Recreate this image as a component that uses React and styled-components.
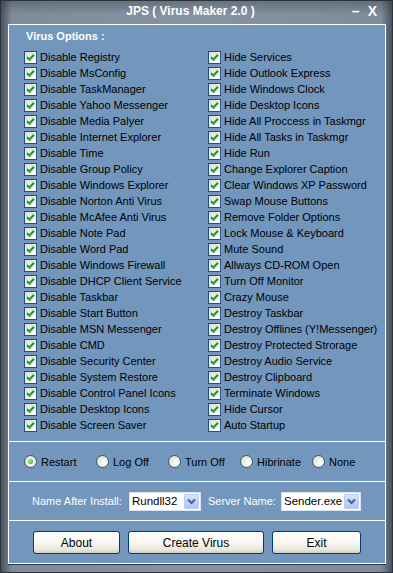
import React from "react"
import styled, { createGlobalStyle } from "styled-components"

const GlobalStyle = createGlobalStyle`
  * { box-sizing: border-box; }
  body {
    margin: 0;
    background: #3a434d;
    font-family: Tahoma, "Liberation Sans", Arial, sans-serif;
    font-size: 11px;
  }
`

const leftOptions = [
  "Disable Registry",
  "Disable MsConfig",
  "Disable TaskManager",
  "Disable Yahoo Messenger",
  "Disable Media Palyer",
  "Disable Internet Explorer",
  "Disable Time",
  "Disable Group Policy",
  "Disable Windows Explorer",
  "Disable Norton Anti Virus",
  "Disable McAfee Anti Virus",
  "Disable Note Pad",
  "Disable Word Pad",
  "Disable Windows Firewall",
  "Disable DHCP Client Service",
  "Disable Taskbar",
  "Disable Start Button",
  "Disable MSN Messenger",
  "Disable CMD",
  "Disable Security Center",
  "Disable System Restore",
  "Disable Control Panel Icons",
  "Disable Desktop Icons",
  "Disable Screen Saver",
]

const rightOptions = [
  "Hide Services",
  "Hide Outlook Express",
  "Hide Windows Clock",
  "Hide Desktop Icons",
  "Hide All Proccess in Taskmgr",
  "Hide All Tasks in Taskmgr",
  "Hide Run",
  "Change Explorer Caption",
  "Clear Windows XP Password",
  "Swap Mouse Buttons",
  "Remove Folder Options",
  "Lock Mouse & Keyboard",
  "Mute Sound",
  "Allways CD-ROM Open",
  "Turn Off Monitor",
  "Crazy Mouse",
  "Destroy Taskbar",
  "Destroy Offlines (Y!Messenger)",
  "Destroy Protected Strorage",
  "Destroy Audio Service",
  "Destroy Clipboard",
  "Terminate Windows",
  "Hide Cursor",
  "Auto Startup",
]

const restartModes = ["Restart", "Log Off", "Turn Off", "Hibrinate", "None"]

const Window = styled.div`
  width: 393px;
  height: 573px;
  display: flex;
  flex-direction: column;
  background: linear-gradient(90deg, #434c57 0%, #7d8b9b 3%, #8593a3 50%, #7d8b9b 97%, #434c57 100%);
  box-shadow: inset 0 0 0 1px #2c333b;
  overflow: hidden;
`

const TitleBar = styled.div`
  height: 24px;
  display: grid;
  grid-template-columns: 40px 1fr 40px;
  align-items: center;
  padding: 0 8px 3px 8px;
  color: #fff;
  font-family: Tahoma, "Liberation Sans", Arial, sans-serif;
  font-weight: bold;
  font-size: 12px;
  background: linear-gradient(180deg, rgba(40, 48, 56, 0.35) 0%, rgba(0, 0, 0, 0) 60%);
`

const Title = styled.div`
  text-align: center;
  padding-right: 12px;
`

const Controls = styled.div`
  justify-self: end;
  display: flex;
  align-items: center;
  gap: 8px;
  font-size: 14px;
  margin-right: 8px;
`

const Panel = styled.div`
  margin: 0 7px 9px 8px;
  border: 1px solid #fff;
  background: #7296bc;
  display: flex;
  flex-direction: column;
  box-shadow: 0 1px 0 #2c333b;
`

const OptionsSection = styled.div`
  padding: 3px 0 8px 15px;
`

const Heading = styled.div`
  color: #fff;
  font-weight: bold;
  line-height: 16px;
  padding-left: 2px;
`

const OptionGrid = styled.div`
  display: grid;
  grid-template-columns: 184px 1fr;
  margin-top: 5px;
`

const Column = styled.div`
  display: flex;
  flex-direction: column;
`

const Row = styled.label`
  display: flex;
  align-items: center;
  height: 16px;
  gap: 3px;
  color: #000;
  white-space: nowrap;
`

const Box = styled.span`
  width: 13px;
  height: 13px;
  border: 1px solid #1c5180;
  background: linear-gradient(135deg, #dcdcd5 0%, #f4f4f0 60%, #fff 100%);
  display: flex;
  align-items: center;
  justify-content: center;
  flex-shrink: 0;
`

const Section = styled.div`
  border-top: 1px solid #fff;
  height: ${p => p.$h}px;
  display: flex;
  align-items: ${p => p.$align || "center"};
  padding: ${p => p.$pad};
`

const RadioItem = styled.label`
  width: 72px;
  display: flex;
  align-items: center;
  gap: 4px;
  color: #000;
  white-space: nowrap;
`

const RadioDot = styled.span`
  width: 13px;
  height: 13px;
  border-radius: 50%;
  border: 1px solid #3e5873;
  background: radial-gradient(circle at 65% 65%, #fff 0%, #eeeee8 45%, #cfcfc6 100%);
  display: flex;
  align-items: center;
  justify-content: center;
  flex-shrink: 0;

  &::after {
    content: "";
    display: ${p => (p.$on ? "block" : "none")};
    width: 5px;
    height: 5px;
    border-radius: 50%;
    background: radial-gradient(circle at 35% 35%, #a8f0a0, #21a121);
  }
`

const FieldLabel = styled.span`
  color: #fff;
  width: ${p => p.$w}px;
  flex-shrink: 0;
  white-space: nowrap;
`

const Select = styled.div`
  width: ${p => p.$w}px;
  height: 19px;
  background: #fff;
  border: 1px solid #dbe3ef;
  display: flex;
  align-items: center;
  padding: 1px 1px 1px 2px;
  margin-right: ${p => p.$mr || 0}px;
  color: #000;
  flex-shrink: 0;
`

const SelectText = styled.span`
  flex: 1;
  font-size: 11.5px;
  overflow: hidden;
  white-space: nowrap;
`

const DropButton = styled.span`
  width: 15px;
  height: 15px;
  border: 1px solid #b9ccf3;
  border-radius: 1px;
  background: linear-gradient(180deg, #dbe6fe 0%, #c1d3fb 50%, #b0c5f5 100%);
  display: flex;
  align-items: center;
  justify-content: center;
  flex-shrink: 0;
`

const Button = styled.button`
  width: ${p => p.$w}px;
  height: 23px;
  border: 1px solid #003c74;
  border-radius: 3px;
  background: linear-gradient(180deg, #ffffff 0%, #f7f6f0 55%, #e8e5da 85%, #d6d0c5 100%);
  font-family: Tahoma, "Liberation Sans", Arial, sans-serif;
  font-size: 12px;
  color: #000;
  padding: 0;
`

const ButtonRow = styled.div`
  display: flex;
  gap: 8px;
`

function Check() {
  return (
    <svg width="9" height="9" viewBox="0 0 9 9">
      <path d="M1 4.2 L3.4 6.6 L8 1.8" fill="none" stroke="#21a121" strokeWidth="2.2" />
    </svg>
  )
}

function Chevron() {
  return (
    <svg width="9" height="7" viewBox="0 0 9 7">
      <path d="M1 1.5 L4.5 5 L8 1.5" fill="none" stroke="#4d6185" strokeWidth="2" />
    </svg>
  )
}

function Option({ label }) {
  return (
    <Row>
      <Box>
        <Check />
      </Box>
      {label}
    </Row>
  )
}

export default function App() {
  return (
    <Window>
      <GlobalStyle />
      <TitleBar>
        <span />
        <Title>JPS ( Virus Maker 2.0 )</Title>
        <Controls>
          <span>–</span>
          <span>X</span>
        </Controls>
      </TitleBar>
      <Panel>
        <OptionsSection>
          <Heading>Virus Options :</Heading>
          <OptionGrid>
            <Column>
              {leftOptions.map(o => (
                <Option key={o} label={o} />
              ))}
            </Column>
            <Column>
              {rightOptions.map(o => (
                <Option key={o} label={o} />
              ))}
            </Column>
          </OptionGrid>
        </OptionsSection>
        <Section $h={40} $pad="0 0 0 15px">
          {restartModes.map((m, i) => (
            <RadioItem key={m}>
              <RadioDot $on={i === 0} />
              {m}
            </RadioItem>
          ))}
        </Section>
        <Section $h={39} $pad="0 0 0 23px">
          <FieldLabel $w={97}>Name After Install:</FieldLabel>
          <Select $w={72} $mr={7}>
            <SelectText>Rundll32</SelectText>
            <DropButton>
              <Chevron />
            </DropButton>
          </Select>
          <FieldLabel $w={73}>Server Name:</FieldLabel>
          <Select $w={80}>
            <SelectText>Sender.exe</SelectText>
            <DropButton>
              <Chevron />
            </DropButton>
          </Select>
        </Section>
        <Section $h={43} $align="flex-start" $pad="10px 0 0 24px">
          <ButtonRow>
            <Button $w={87}>About</Button>
            <Button $w={136}>Create Virus</Button>
            <Button $w={89}>Exit</Button>
          </ButtonRow>
        </Section>
      </Panel>
    </Window>
  )
}
